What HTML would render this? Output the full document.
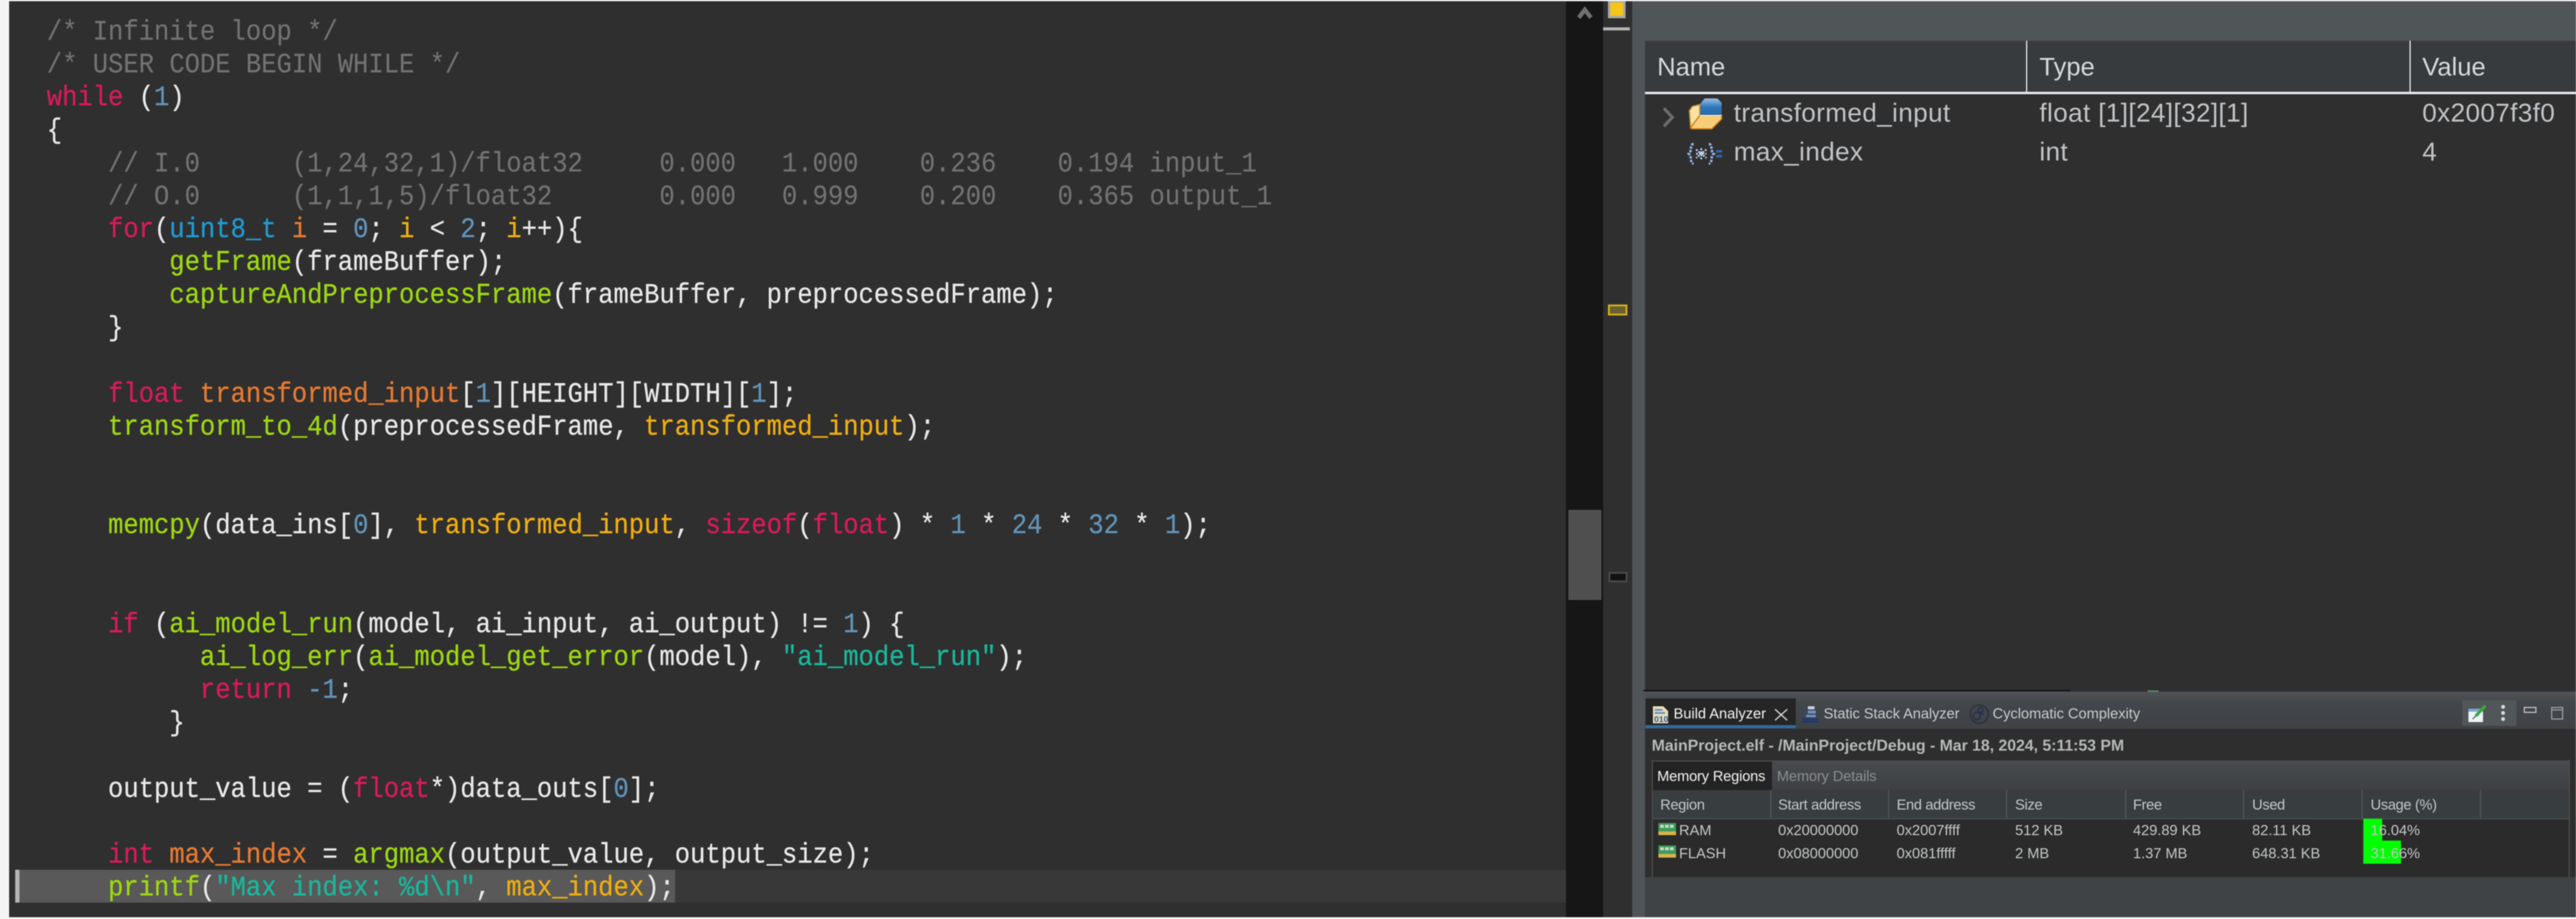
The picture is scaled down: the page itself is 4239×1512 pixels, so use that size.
<!DOCTYPE html>
<html><head><meta charset="utf-8">
<style>
html,body{margin:0;padding:0;background:#f4f4f4;width:4239px;height:1512px;overflow:hidden}
.a{position:absolute;display:block}
#wrap{position:absolute;left:0;top:0;width:4239px;height:1512px;overflow:hidden;filter:blur(.7px)}
pre{position:absolute;left:77px;top:26px;margin:0;font:46px/54.15px "Liberation Mono",monospace;color:#e8e8e8;transform:scaleX(.913);transform-origin:0 0;white-space:pre;-webkit-text-stroke:.4px currentColor}
.c{color:#727272;-webkit-text-stroke:.2px #727272}.k{color:#d81b5a}.f{color:#9ed80f}.t{color:#1f9bd1}.n{color:#6193b8}.o{color:#e67a32}.y{color:#efae10}.s{color:#19b89c}
.u{position:absolute;font-family:"Liberation Sans",sans-serif;white-space:pre;line-height:1}
.h{font-size:42px;color:#d4d8da}
.r{font-size:43px;color:#bfc3c6;letter-spacing:.6px}
.m{font-size:24px;color:#c2c5c6}
.mh{letter-spacing:-.5px}
</style></head><body>
<div id="wrap">
<!-- editor -->
<div class="a" style="left:15px;top:2px;width:2562px;height:1507px;background:#2f2f2f"></div>
<div class="a" style="left:1111px;top:1431px;width:1466px;height:54px;background:#383838"></div>
<div class="a" style="left:25px;top:1431px;width:1086px;height:54px;background:#595959"></div>
<div class="a" style="left:25px;top:1431px;width:7px;height:54px;background:#b4b4b4"></div>
<pre><span class="c">/* Infinite loop */</span>
<span class="c">/* USER CODE BEGIN WHILE */</span>
<span class="k">while</span> (<span class="n">1</span>)
{
    <span class="c">// I.0      (1,24,32,1)/float32     0.000   1.000    0.236    0.194 input_1</span>
    <span class="c">// O.0      (1,1,1,5)/float32       0.000   0.999    0.200    0.365 output_1</span>
    <span class="k">for</span>(<span class="t">uint8_t</span> <span class="o">i</span> = <span class="n">0</span>; <span class="y">i</span> &lt; <span class="n">2</span>; <span class="y">i</span>++){
        <span class="f">getFrame</span>(frameBuffer);
        <span class="f">captureAndPreprocessFrame</span>(frameBuffer, preprocessedFrame);
    }

    <span class="k">float</span> <span class="o">transformed_input</span>[<span class="n">1</span>][HEIGHT][WIDTH][<span class="n">1</span>];
    <span class="f">transform_to_4d</span>(preprocessedFrame, <span class="y">transformed_input</span>);


    <span class="f">memcpy</span>(data_ins[<span class="n">0</span>], <span class="y">transformed_input</span>, <span class="k">sizeof</span>(<span class="k">float</span>) * <span class="n">1</span> * <span class="n">24</span> * <span class="n">32</span> * <span class="n">1</span>);


    <span class="k">if</span> (<span class="f">ai_model_run</span>(model, ai_input, ai_output) != <span class="n">1</span>) {
          <span class="f">ai_log_err</span>(<span class="f">ai_model_get_error</span>(model), <span class="s">"ai_model_run"</span>);
          <span class="k">return</span> <span class="n">-1</span>;
        }

    output_value = (<span class="k">float</span>*)data_outs[<span class="n">0</span>];

    <span class="k">int</span> <span class="o">max_index</span> = <span class="f">argmax</span>(output_value, output_size);
    <span class="f">printf</span>(<span class="s">"Max index: %d\n"</span>, <span class="y">max_index</span>);</pre>

<!-- scroll track + overview -->
<div class="a" style="left:2577px;top:2px;width:61px;height:1507px;background:#161616"></div>
<div class="a" style="left:2638px;top:2px;width:48px;height:1507px;background:#2f2f2f"></div>
<div class="a" style="left:2686px;top:2px;width:21px;height:1507px;background:#50555a"></div>
<svg class="a" style="left:2590px;top:6px" width="36" height="30"><path d="M8 23 18 10 28 23" fill="none" stroke="#707070" stroke-width="7"/></svg>
<div class="a" style="left:2581px;top:839px;width:52px;height:146px;background:#4f4f4f;border:1px solid #5c5c5c"></div>
<div class="a" style="left:2646px;top:2px;width:21px;height:22px;background:#f5c518;border:4px solid #a8a8a8;border-top-width:2px;"></div>
<div class="a" style="left:2638px;top:45px;width:44px;height:5px;background:#b4b4b4"></div>
<div class="a" style="left:2646px;top:501px;width:26px;height:12px;background:#6b6030;border:3px solid #d6b01f"></div>
<div class="a" style="left:2647px;top:941px;width:25px;height:11px;background:#111;border:3px solid #4a4a4a"></div>

<!-- variables panel -->
<div class="a" style="left:2707px;top:2px;width:1532px;height:1136px;background:#2f2f2f"></div>
<div class="a" style="left:2707px;top:2px;width:1532px;height:65px;background:#505558"></div>
<div class="a" style="left:2707px;top:67px;width:1532px;height:84px;background:#373b3e"></div>
<div class="a" style="left:2707px;top:151px;width:1532px;height:4px;background:#e8e8e8"></div>
<div class="a" style="left:3334px;top:67px;width:2px;height:88px;background:#e8e8e8"></div>
<div class="a" style="left:3965px;top:67px;width:2px;height:88px;background:#e8e8e8"></div>
<span class="u h" style="left:2727px;top:89px">Name</span>
<span class="u h" style="left:3356px;top:89px">Type</span>
<span class="u h" style="left:3986px;top:89px">Value</span>
<svg class="a" style="left:2730px;top:172px" width="32" height="40"><path d="M8 6 22 21 8 36" fill="none" stroke="#6c6c6c" stroke-width="5"/></svg>
<svg class="a" style="left:2776px;top:158px" width="62" height="58">
<defs><linearGradient id="b1" x1="0" y1="0" x2="0" y2="1"><stop offset="0" stop-color="#9cc0e4"/><stop offset=".5" stop-color="#2f78bc"/><stop offset="1" stop-color="#2a66a8"/></linearGradient></defs>
<path d="M29 4H50L57 11V32H21V14Z" fill="url(#b1)"/>
<path d="M4 24 9 17 21 14V34L6 52Z" fill="#fae2a6" stroke="#d08a20" stroke-width="2"/>
<path d="M21 32H57V38L41 54H8L6 52Z" fill="#f7cd78" stroke="#c87a10" stroke-width="2"/>
<path d="M21 32H57" stroke="#fff" stroke-width="1.5"/></svg>
<svg class="a" style="left:2776px;top:232px" width="62" height="44" fill="none" stroke="#8fb6e6" stroke-width="4">
<path d="M11 5C4 5 9 17 3 21 9 25 4 37 11 37" stroke-dasharray="4 2"/><path d="M36 5C43 5 38 17 44 21 38 25 43 37 36 37" stroke-dasharray="4 2"/>
<path d="M15 14 32 28M32 14 15 28M15 21H32M23.5 12V30" stroke="#c2d8f4" stroke-width="3" stroke-dasharray="3 2"/>
<path d="M48 17H58M48 25H58" stroke="#2f69a8"/></svg>
<span class="u r" style="left:2853px;top:165px">transformed_input</span>
<span class="u r" style="left:3356px;top:165px">float [1][24][32][1]</span>
<span class="u r" style="left:3986px;top:165px">0x2007f3f0</span>
<span class="u r" style="left:2853px;top:229px">max_index</span>
<span class="u r" style="left:3356px;top:229px">int</span>
<span class="u r" style="left:3986px;top:229px">4</span>

<!-- lower panel -->
<div class="a" style="left:2704px;top:1135px;width:703px;height:2px;background:#111"></div>
<div class="a" style="left:3534px;top:1136px;width:18px;height:2px;background:#5a9c68"></div>
<div class="a" style="left:2707px;top:1138px;width:1532px;height:61px;background:linear-gradient(#4f5457,#43464a 30%,#3f4245)"></div>
<div class="a" style="left:2708px;top:1149px;width:247px;height:44px;background:#252525"></div>
<div class="a" style="left:2708px;top:1193px;width:247px;height:5px;background:#2f6ca0"></div>
<svg class="a" style="left:2718px;top:1160px" width="30" height="32">
<path d="M2 2H19L27 10V30H2Z" fill="#e8ddb8"/><path d="M5 8H18M5 13H22" stroke="#6d8fc4" stroke-width="3"/>
<text x="4" y="28" font-family="Liberation Sans,sans-serif" font-weight="bold" font-size="14" fill="#2d5a9a">010</text></svg>
<span class="u" style="left:2754px;top:1163px;font-size:24px;color:#f2f2f2">Build Analyzer</span>
<svg class="a" style="left:2919px;top:1165px" width="24" height="22"><path d="M2 2 22 20M22 2 2 20" stroke="#ddd" stroke-width="2"/></svg>
<svg class="a" style="left:2964px;top:1160px" width="30" height="30">
<rect x="11" y="2" width="11" height="5" fill="#c8d0dc"/><rect x="11" y="9" width="13" height="5" fill="#6d8fc4"/><rect x="3" y="11" width="5" height="4" fill="#1f4f8f"/><rect x="8" y="16" width="16" height="4" fill="#6d8fc4"/><rect x="2" y="22" width="26" height="3" fill="#173a78"/><rect x="1" y="26" width="28" height="3" fill="#173a78"/></svg>
<span class="u" style="left:3001px;top:1163px;font-size:24px;color:#c8cacb;letter-spacing:-.1px">Static Stack Analyzer</span>
<svg class="a" style="left:3240px;top:1158px" width="34" height="34" fill="none" stroke="#26324a" stroke-width="2.5"><circle cx="17" cy="17" r="15" stroke="#2a3342"/><circle cx="19" cy="10" r="4"/><circle cx="13" cy="20" r="6"/><path d="M19 14 24 18"/></svg>
<span class="u" style="left:3279px;top:1163px;font-size:24px;color:#c8cacb">Cyclomatic Complexity</span>
<div class="a" style="left:4052px;top:1152px;width:89px;height:42px;background:#515659"></div>
<svg class="a" style="left:4060px;top:1158px" width="34" height="32">
<rect x="2" y="8" width="24" height="22" fill="#eef3fa"/><rect x="2" y="8" width="24" height="5" fill="#7ea8d8"/><path d="M14 20 30 3" stroke="#3aa838" stroke-width="5"/><path d="M9 25 14 20" stroke="#333" stroke-width="1.5"/></svg>
<svg class="a" style="left:4112px;top:1158px" width="14" height="32" fill="#d8d8d8"><circle cx="7" cy="5" r="3.2"/><circle cx="7" cy="15" r="3.2"/><circle cx="7" cy="25" r="3.2"/></svg>
<div class="a" style="left:4153px;top:1163px;width:17px;height:6px;border:2px solid #bdbdbd"></div>
<div class="a" style="left:4198px;top:1163px;width:16px;height:17px;border:2px solid #9a9a9a"><div style="height:2px;background:#9a9a9a;margin-top:2px"></div></div>

<div class="a" style="left:2707px;top:1199px;width:1532px;height:244px;background:#2e2e2e"></div>
<div class="a" style="left:2707px;top:1443px;width:1532px;height:66px;background:#3f4345"></div>
<span class="u" style="left:2718px;top:1213px;font-size:26px;font-weight:bold;color:#b4b7b8">MainProject.elf - /MainProject/Debug - Mar 18, 2024, 5:11:53 PM</span>
<div class="a" style="left:2718px;top:1250px;width:1509px;height:193px;background:#2b2b2b"></div>
<div class="a" style="left:2718px;top:1250px;width:2px;height:193px;background:#4a4d4f"></div>
<div class="a" style="left:4227px;top:1250px;width:2px;height:193px;background:#4a4d4f"></div>
<div class="a" style="left:2720px;top:1251px;width:1507px;height:49px;background:linear-gradient(#484b4e,#3e4043)"></div>
<div class="a" style="left:2720px;top:1253px;width:196px;height:47px;background:#232323"></div>
<span class="u" style="left:2727px;top:1266px;font-size:24px;color:#f0f0f0;letter-spacing:-.25px">Memory Regions</span>
<span class="u" style="left:2924px;top:1266px;font-size:24px;color:#8a8c8d;letter-spacing:-.2px">Memory Details</span>
<div class="a" style="left:2720px;top:1300px;width:1507px;height:46px;background:#383d40"></div>
<div class="a" style="left:2720px;top:1346px;width:1507px;height:2px;background:#4a4c4e"></div>
<div class="a" style="left:2913px;top:1300px;width:2px;height:46px;background:#505456"></div>
<div class="a" style="left:3107px;top:1300px;width:2px;height:46px;background:#505456"></div>
<div class="a" style="left:3301px;top:1300px;width:2px;height:46px;background:#505456"></div>
<div class="a" style="left:3497px;top:1300px;width:2px;height:46px;background:#505456"></div>
<div class="a" style="left:3691px;top:1300px;width:2px;height:46px;background:#505456"></div>
<div class="a" style="left:3886px;top:1300px;width:2px;height:46px;background:#505456"></div>
<div class="a" style="left:4081px;top:1300px;width:2px;height:46px;background:#505456"></div>
<span class="u m mh" style="left:2732px;top:1313px">Region</span>
<span class="u m mh" style="left:2926px;top:1313px">Start address</span>
<span class="u m mh" style="left:3121px;top:1313px">End address</span>
<span class="u m mh" style="left:3316px;top:1313px">Size</span>
<span class="u m mh" style="left:3510px;top:1313px">Free</span>
<span class="u m mh" style="left:3706px;top:1313px">Used</span>
<span class="u m mh" style="left:3901px;top:1313px">Usage (%)</span>

<div class="a" style="left:3889px;top:1347px;width:31px;height:36px;background:#00ff00"></div>
<div class="a" style="left:3889px;top:1383px;width:62px;height:38px;background:#00ff00"></div>
<svg class="a" style="left:2729px;top:1354px" width="30" height="24"><rect x="0" y="0" width="29" height="14" fill="#3f9b5a"/><rect x="3" y="3" width="6" height="5" fill="#c9d7c8"/><rect x="11" y="3" width="6" height="5" fill="#c9d7c8"/><rect x="19" y="3" width="6" height="5" fill="#c9d7c8"/><rect x="0" y="14" width="29" height="6" fill="#d9b24a"/></svg>
<svg class="a" style="left:2729px;top:1391px" width="30" height="24"><rect x="0" y="0" width="29" height="14" fill="#3f9b5a"/><rect x="3" y="3" width="6" height="5" fill="#c9d7c8"/><rect x="11" y="3" width="6" height="5" fill="#c9d7c8"/><rect x="19" y="3" width="6" height="5" fill="#c9d7c8"/><rect x="0" y="14" width="29" height="6" fill="#d9b24a"/></svg>
<span class="u m" style="left:2763px;top:1355px">RAM</span>
<span class="u m" style="left:2926px;top:1355px">0x20000000</span>
<span class="u m" style="left:3121px;top:1355px">0x2007ffff</span>
<span class="u m" style="left:3316px;top:1355px">512 KB</span>
<span class="u m" style="left:3510px;top:1355px">429.89 KB</span>
<span class="u m" style="left:3706px;top:1355px">82.11 KB</span>
<span class="u m" style="left:3901px;top:1355px">16.04%</span>
<span class="u m" style="left:2763px;top:1393px">FLASH</span>
<span class="u m" style="left:2926px;top:1393px">0x08000000</span>
<span class="u m" style="left:3121px;top:1393px">0x081fffff</span>
<span class="u m" style="left:3316px;top:1393px">2 MB</span>
<span class="u m" style="left:3510px;top:1393px">1.37 MB</span>
<span class="u m" style="left:3706px;top:1393px">648.31 KB</span>
<span class="u m" style="left:3901px;top:1393px">31.66%</span>
</div>
</body></html>
